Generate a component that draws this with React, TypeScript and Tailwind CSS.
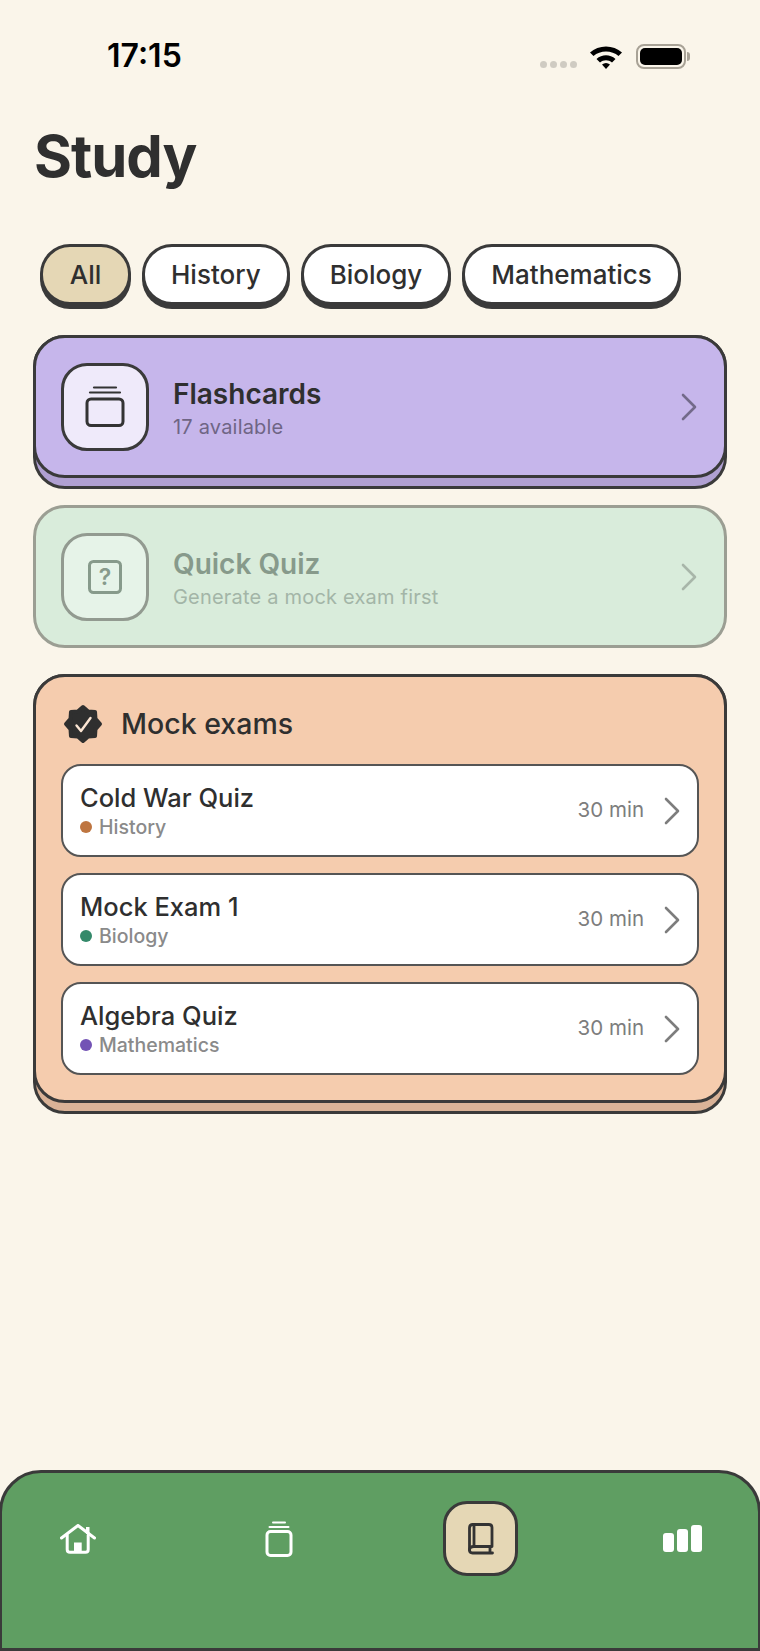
import { ChevronRight } from "lucide-react";

const exams = [
  { title: "Cold War Quiz", subject: "History", dot: "bg-[#BE7540]" },
  { title: "Mock Exam 1", subject: "Biology", dot: "bg-[#34896A]" },
  { title: "Algebra Quiz", subject: "Mathematics", dot: "bg-[#7353B5]" },
];

// eight-lobed badge outline, alternating outer and inner radius
const badgePoints = Array.from({ length: 16 }, (_, i) => {
  const r = i % 2 === 0 ? 17 : 13.5;
  const a = (i * Math.PI) / 8 - Math.PI / 2;
  return `${(20 + r * Math.cos(a)).toFixed(2)},${(20 + r * Math.sin(a)).toFixed(2)}`;
}).join(" ");

function StatusBar() {
  return (
    <div className="flex h-[40px] items-center justify-between pl-[107px] pr-[70px] mt-[36px]">
      <span className="text-[32px] font-semibold leading-[40px] text-black">17:15</span>
      <div className="flex items-center">
        <div className="flex gap-[3px] mt-[16px] mr-[12px]">
          <span className="w-[7px] h-[7px] rounded-full bg-[#CFCBC2]" />
          <span className="w-[7px] h-[7px] rounded-full bg-[#CFCBC2]" />
          <span className="w-[7px] h-[7px] rounded-full bg-[#CFCBC2]" />
          <span className="w-[7px] h-[7px] rounded-full bg-[#CFCBC2]" />
        </div>
        <svg width="34" height="25" viewBox="0 0 34 25" className="mr-[13px]">
          <path d="M1 8.5C9.5 0.5 24.5 0.5 33 8.5L29.5 12C23 6 11 6 4.5 12Z" fill="#000" />
          <path d="M7.5 15C13 10 21 10 26.5 15L23 18.5C19.5 15.5 14.5 15.5 11 18.5Z" fill="#000" />
          <path d="M13 20.5C15.5 18.5 18.5 18.5 21 20.5L17 25Z" fill="#000" />
        </svg>
        <div className="flex items-center">
          <div className="w-[50px] h-[25px] rounded-[8px] border-[2px] border-[#A8A296] p-[2px]">
            <div className="w-full h-full rounded-[5px] bg-black" />
          </div>
          <span className="w-[3px] h-[9px] ml-[1px] rounded-r-full bg-[#A8A296]" />
        </div>
      </div>
    </div>
  );
}

function FilterChip({ label, active }: { label: string; active?: boolean }) {
  return (
    <div
      className={`h-[61px] flex items-center justify-center rounded-[30px] border-[3px] border-[#3A3A3A] shadow-[0_4px_0_#3A3A3A] text-[26px] font-medium text-[#2F2F2F] ${
        active ? "w-[91px] bg-[#E5D7B5]" : "bg-white px-[26px]"
      }`}
    >
      {label}
    </div>
  );
}

function StackCard({ back, front, children }: { back: string; front: string; children: React.ReactNode }) {
  return (
    <div className={`rounded-[32px] border-[3px] border-[#3A3A3A] pb-[8px] ${back}`}>
      <div className={`-mx-[3px] -mt-[3px] rounded-[32px] border-[3px] border-[#3A3A3A] ${front}`}>{children}</div>
    </div>
  );
}

function CardsGlyph({ color }: { color: string }) {
  return (
    <svg width="40" height="41" viewBox="0 0 40 41" fill="none" stroke={color} strokeLinecap="round">
      <path d="M9 1.5H31" strokeWidth="2.2" />
      <path d="M5 6.5H35" strokeWidth="2.2" />
      <rect x="2" y="13" width="36" height="26.5" rx="4" strokeWidth="3" />
    </svg>
  );
}

function ActionBody({
  title,
  sub,
  titleColor,
  subColor,
  chevron,
  box,
  children,
}: {
  title: string;
  sub: string;
  titleColor: string;
  subColor: string;
  chevron: string;
  box: string;
  children: React.ReactNode;
}) {
  return (
    <div className="flex h-[137px] items-center pl-[25px] pr-[11px]">
      <div className={`w-[88px] h-[88px] flex items-center justify-center rounded-[26px] border-[3px] ${box}`}>{children}</div>
      <div className="ml-[24px] flex-1 pt-[2px]">
        <div className={`text-[28px] font-semibold leading-[36px] ${titleColor}`}>{title}</div>
        <div className={`mt-[2px] text-[20px] leading-[26px] tracking-[0.2px] ${subColor}`}>{sub}</div>
      </div>
      <ChevronRight size={48} strokeWidth={1.3} className={chevron} />
    </div>
  );
}

function ExamRow({ title, subject, dot }: { title: string; subject: string; dot: string }) {
  return (
    <div className="flex h-[93px] items-center rounded-[20px] border-2 border-[#555555] bg-white pl-[17px] pr-[1px]">
      <div className="flex-1">
        <div className="text-[25.5px] font-medium leading-[32px] text-[#2F2F2F]">{title}</div>
        <div className="flex items-center">
          <span className={`w-[12px] h-[12px] rounded-full ${dot}`} />
          <span className="ml-[7px] text-[19.5px] font-medium leading-[26px] text-[#8A8A8A]">{subject}</span>
        </div>
      </div>
      <span className="text-[20.5px] text-[#7D7D7D]">30 min</span>
      <ChevronRight size={48} strokeWidth={1.3} className="ml-[4px] text-[#7D7D7D]" />
    </div>
  );
}

function TabSlot({ children, active }: { children: React.ReactNode; active?: boolean }) {
  return (
    <div
      className={`w-[75px] h-[75px] flex items-center justify-center ${
        active ? "rounded-[24px] border-[3px] border-[#3A3A3A] bg-[#E5D7B5]" : ""
      }`}
    >
      {children}
    </div>
  );
}

function TabBar() {
  return (
    <div className="mt-auto -mx-px h-[181px] rounded-t-[42px] border-[3px] border-[#3A3A3A] bg-[#5F9E62] flex items-start justify-between px-[38.5px] pt-[28px]">
      <TabSlot>
        <svg width="36" height="30" viewBox="0 0 36 30" fill="none" stroke="#fff" strokeWidth="3" strokeLinecap="round" strokeLinejoin="round">
          <path d="M1.5 14L18 1.5L34.5 14" />
          <path d="M7.2 11V25.5C7.2 27.5 8 28.3 10 28.3H25.5C27.5 28.3 28.2 27.5 28.2 25.5V11" />
          <rect x="26" y="3" width="3.5" height="7" fill="#fff" stroke="none" />
          <rect x="14" y="18.5" width="7.7" height="10" fill="#fff" stroke="none" />
        </svg>
      </TabSlot>
      <TabSlot>
        <svg width="28" height="36" viewBox="0 0 28 36" fill="none" stroke="#fff" strokeLinecap="round">
          <path d="M8 1.5H20" strokeWidth="2" />
          <path d="M4.5 6H23.5" strokeWidth="2" />
          <rect x="2" y="10.5" width="24" height="24" rx="3.5" strokeWidth="3" />
        </svg>
      </TabSlot>
      <TabSlot active>
        <svg width="26" height="32" viewBox="0 0 26 32" fill="none" stroke="#333" strokeWidth="2.8" strokeLinejoin="round" strokeLinecap="round">
          <path d="M5 1.5H21C23 1.5 24 2.5 24 4.5V23.5H6" />
          <path d="M6 1.5V23.5" />
          <path d="M5 1.5C2.5 1.5 1.5 2.5 1.5 5V27C1.5 29 2.5 30 4.5 30H24.5" />
          <path d="M6 23.5C2.5 23.5 1.5 25 1.5 27" />
          <path d="M22 24V29.5" />
        </svg>
      </TabSlot>
      <TabSlot>
        <div className="flex items-end gap-[3px] h-[27px] ml-[1px]">
          <span className="w-[11px] h-[19px] rounded-[3px] bg-white" />
          <span className="w-[11px] h-[23px] rounded-[3px] bg-white" />
          <span className="w-[11px] h-[27px] rounded-[3px] bg-white" />
        </div>
      </TabSlot>
    </div>
  );
}

export default function App() {
  return (
    <div className="w-[760px] h-[1651px] flex flex-col bg-[#FAF5EA] overflow-hidden font-['Inter',sans-serif]">
      <StatusBar />
      <h1 className="mt-[45px] pl-[34px] text-[58px] font-bold leading-[70px] tracking-[-1px] text-[#2F2F2F]">Study</h1>
      <div className="mt-[53px] flex gap-[11px] pl-[40px]">
        <FilterChip label="All" active />
        <FilterChip label="History" />
        <FilterChip label="Biology" />
        <FilterChip label="Mathematics" />
      </div>
      <div className="mt-[30px] mx-[33px] flex flex-col">
        <StackCard back="bg-[#B0A0D2]" front="bg-[#C6B6EB]">
          <ActionBody
            title="Flashcards"
            sub="17 available"
            titleColor="text-[#2F2F2F]"
            subColor="text-[#6F6585]"
            chevron="text-[#736A8A]"
            box="bg-[#EFEAFA] border-[#3A3A3A]"
          >
            <CardsGlyph color="#333" />
          </ActionBody>
        </StackCard>
        <div className="mt-[16px] rounded-[32px] border-[3px] border-[#9B9E93] bg-[#D9ECDB]">
          <ActionBody
            title="Quick Quiz"
            sub="Generate a mock exam first"
            titleColor="text-[#879A8B]"
            subColor="text-[#A3B5A7]"
            chevron="text-[#A8B6A9]"
            box="bg-[#E6F3E8] border-[#929A90]"
          >
            <svg width="34" height="34" viewBox="0 0 34 34" fill="none">
              <rect x="1.5" y="1.5" width="31" height="31" rx="4" stroke="#879A8B" strokeWidth="3" />
              <text x="17" y="25" textAnchor="middle" fontFamily="Inter, sans-serif" fontSize="23" fontWeight="600" fill="#879A8B">?</text>
            </svg>
          </ActionBody>
        </div>
        <div className="mt-[26px]">
          <StackCard back="bg-[#D9B297]" front="bg-[#F5CCAE]">
            <div className="px-[25px] pt-[26px] pb-[25px]">
              <div className="flex items-center h-[46px] -mt-[2px]">
                <svg width="40" height="40" viewBox="0 0 40 40" className="ml-[2px]">
                  <polygon points={badgePoints} fill="#2F2F2F" stroke="#2F2F2F" strokeWidth="4" strokeLinejoin="round" />
                  <path d="M13.5 21.5L18 27L27.5 14" fill="none" stroke="#FBE5D3" strokeWidth="2.4" strokeLinecap="round" strokeLinejoin="round" />
                </svg>
                <span className="ml-[18px] text-[28.5px] font-medium text-[#2F2F2F]">Mock exams</span>
              </div>
              <div className="mt-[17px] flex flex-col gap-[16px]">
                {exams.map((exam) => (
                  <ExamRow key={exam.title} title={exam.title} subject={exam.subject} dot={exam.dot} />
                ))}
              </div>
            </div>
          </StackCard>
        </div>
      </div>
      <TabBar />
    </div>
  );
}
